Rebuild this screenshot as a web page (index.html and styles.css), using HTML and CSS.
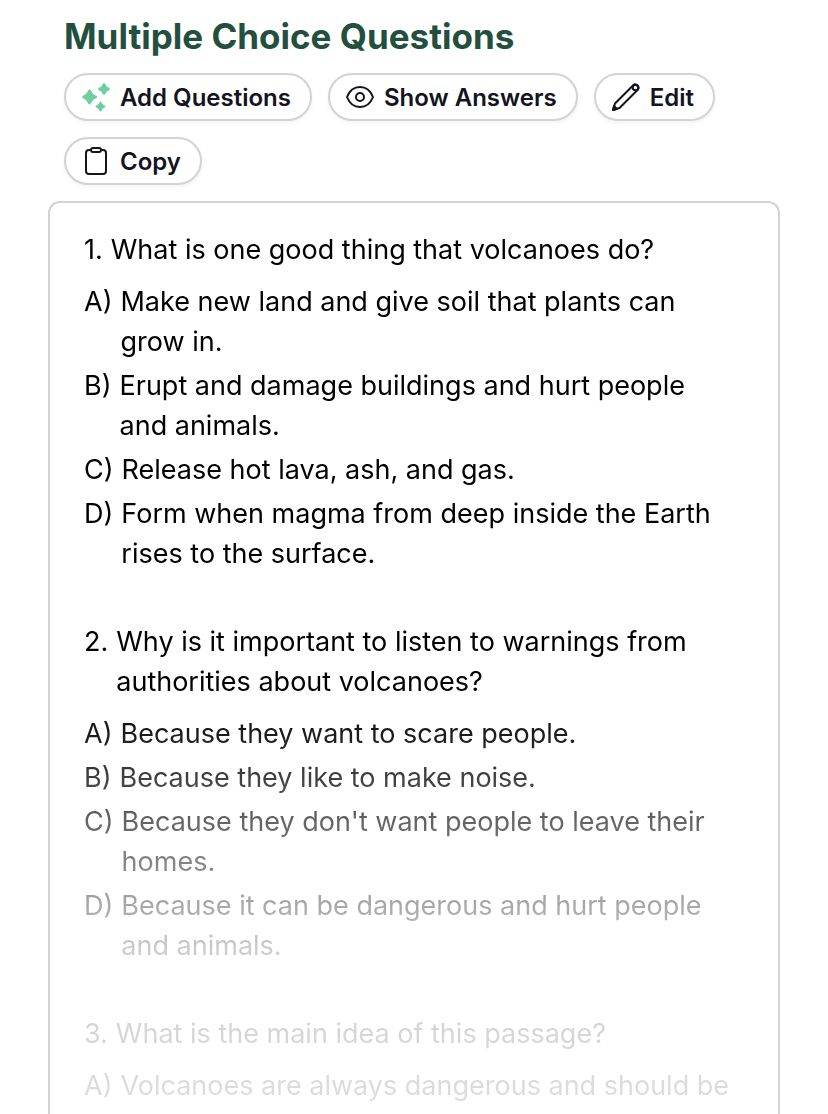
FILE: index.html
```html
<!DOCTYPE html>
<html lang="en">
  <head>
    <meta charset="UTF-8" />
    <meta name="viewport" content="width=device-width, initial-scale=1.0" />
    <title>Multiple Choice Questions</title>
    <link rel="stylesheet" href="styles.css">
  </head>
  <body>
    <main class="page">
      <header class="header">
        <h1>Multiple Choice Questions</h1>
        <div class="actions">
          <button type="button" class="pill">
            <svg class="icon sparkles" viewBox="0 0 32 32" aria-hidden="true">
              <path d="M9.5 9 Q10.5 9 11.2 11 Q12.3 13.7 15 14.8 Q17 15.300 17 16 Q17 16.700 15 17.200 Q12.300 18.300 11.200 21 Q10.500 23 9.500 23 Q8.500 23 7.800 21 Q6.700 18.300 4 17.200 Q2.500 16.700 2.500 16 Q2.500 15.300 4 14.800 Q6.700 13.700 7.800 11 Q8.500 9 9.500 9Z" />
              <path d="M24 2.500 Q24.700 2.500 25.300 4 Q26 6 28 6.700 Q29.500 7.300 29.500 8 Q29.500 8.700 28 9.300 Q26 10 25.300 12 Q24.700 13.500 24 13.500 Q23.300 13.500 22.700 12 Q22 10 20 9.300 Q18.500 8.700 18.500 8 Q18.500 7.300 20 6.700 Q22 6 22.700 4 Q23.300 2.500 24 2.500Z" />
              <path d="M20.500 21 Q21.200 21 21.700 22.500 Q22.300 23.700 23.500 24.300 Q25 24.800 25 25.500 Q25 26.200 23.500 26.700 Q22.300 27.300 21.700 28.500 Q21.200 30 20.500 30 Q19.800 30 19.300 28.500 Q18.700 27.300 17.500 26.700 Q16 26.200 16 25.500 Q16 24.800 17.500 24.300 Q18.700 23.700 19.300 22.500 Q19.800 21 20.500 21Z" />
            </svg>
            Add Questions
          </button>
          <button type="button" class="pill">
            <svg class="icon" viewBox="0 0 32 32" aria-hidden="true">
              <path d="M3 16 C5.500 9.500 10 6 16 6 S26.500 9.500 29 16 C26.500 22.500 22 26 16 26 S5.500 22.500 3 16Z" />
              <circle cx="16" cy="16" r="4" />
            </svg>
            Show Answers
          </button>
          <button type="button" class="pill">
            <svg class="icon" viewBox="0 0 32 32" aria-hidden="true">
              <path d="M3 29 L5 22.500 L23.500 4 C25.500 2 30 6 28 8.500 L9.500 27 Z" />
              <circle cx="25.500" cy="6.500" r="2.800" />
              <path class="solid" d="M3 29 L4 25 L7 28Z" />
            </svg>
            Edit
          </button>
          <button type="button" class="pill">
            <svg class="icon" viewBox="0 0 32 32" aria-hidden="true">
              <path d="M11 5 H9 Q6 5 6 8 V26 Q6 29 9 29 H23 Q26 29 26 26 V8 Q26 5 23 5 H21" />
              <rect x="11" y="3" width="10" height="4" rx="2" />
            </svg>
            Copy
          </button>
        </div>
      </header>

      <section class="card">
        <div class="questions">
          <article class="question">
            <h2 class="row"><span>1.</span><span>What is one good thing that volcanoes do?</span></h2>
            <ul class="options">
              <li class="row"><span>A)</span><span>Make new land and give soil that plants can grow in.</span></li>
              <li class="row"><span>B)</span><span>Erupt and damage buildings and hurt people and animals.</span></li>
              <li class="row"><span>C)</span><span>Release hot lava, ash, and gas.</span></li>
              <li class="row"><span>D)</span><span>Form when magma from deep inside the Earth rises to the surface.</span></li>
            </ul>
          </article>
          <article class="question">
            <h2 class="row"><span>2.</span><span>Why is it important to listen to warnings from authorities about volcanoes?</span></h2>
            <ul class="options">
              <li class="row"><span>A)</span><span>Because they want to scare people.</span></li>
              <li class="row"><span>B)</span><span>Because they like to make noise.</span></li>
              <li class="row"><span>C)</span><span>Because they don't want people to leave their homes.</span></li>
              <li class="row"><span>D)</span><span>Because it can be dangerous and hurt people and animals.</span></li>
            </ul>
          </article>
          <article class="question">
            <h2 class="row"><span>3.</span><span>What is the main idea of this passage?</span></h2>
            <ul class="options">
              <li class="row"><span>A)</span><span>Volcanoes are always dangerous and should be</span></li>
            </ul>
          </article>
        </div>
      </section>
    </main>
  </body>
</html>
```
FILE: styles.css
```css
* {
  box-sizing: border-box;
}
body {
  margin: 0;
  background-color: #fff;
  color: #000;
  font-family: Inter, sans-serif;
}
.page {
  display: flex;
  flex-direction: column;
  min-height: 100vh;
  padding: 16px 48px 0;
}
.header {
  padding: 0 16px;
}
h1 {
  margin: 0 0 17px;
  color: #234f3f;
  font-size: 35px;
  font-weight: 700;
  line-height: 40px;
}
.actions {
  display: flex;
  flex-wrap: wrap;
  gap: 16px;
  margin-bottom: 16px;
}
.pill {
  display: flex;
  align-items: center;
  gap: 8px;
  height: 48px;
  padding: 0 19px 0 14px;
  border: 2px solid #d2d2d7;
  border-radius: 24px;
  background-color: #fff;
  box-shadow: 0 2px 4px rgba(20, 20, 50, 0.05);
  color: #14141f;
  font-family: inherit;
  font-size: 24px;
  font-weight: 600;
  cursor: pointer;
}
.icon {
  width: 32px;
  height: 32px;
  fill: none;
  stroke: currentColor;
  stroke-width: 2;
  stroke-linecap: round;
  stroke-linejoin: round;
}
.icon .solid {
  fill: currentColor;
}
.sparkles {
  fill: #6ccf9d;
  stroke: #6ccf9d;
  stroke-width: 1;
}
.card {
  flex: 1;
  padding: 27px 42px 0 34px;
  border: 2px solid #d2d2d7;
  border-bottom: 0;
  border-radius: 12px 12px 0 0;
}
/* fade out the part behind the preview limit */
.questions {
  mask-image: linear-gradient(
    #000 470px,
    rgba(0, 0, 0, 0.2) 720px,
    rgba(0, 0, 0, 0.13) 880px
  );
}
.question {
  margin-bottom: 48px;
}
.question:last-child {
  margin-bottom: 0;
}
.row {
  display: flex;
  gap: 8px;
  margin: 0;
  font-size: 27px;
  font-weight: 400;
  line-height: 40px;
}
.options {
  display: flex;
  flex-direction: column;
  gap: 4px;
  margin: 12px 0 0;
  padding: 0;
  list-style: none;
}
```
